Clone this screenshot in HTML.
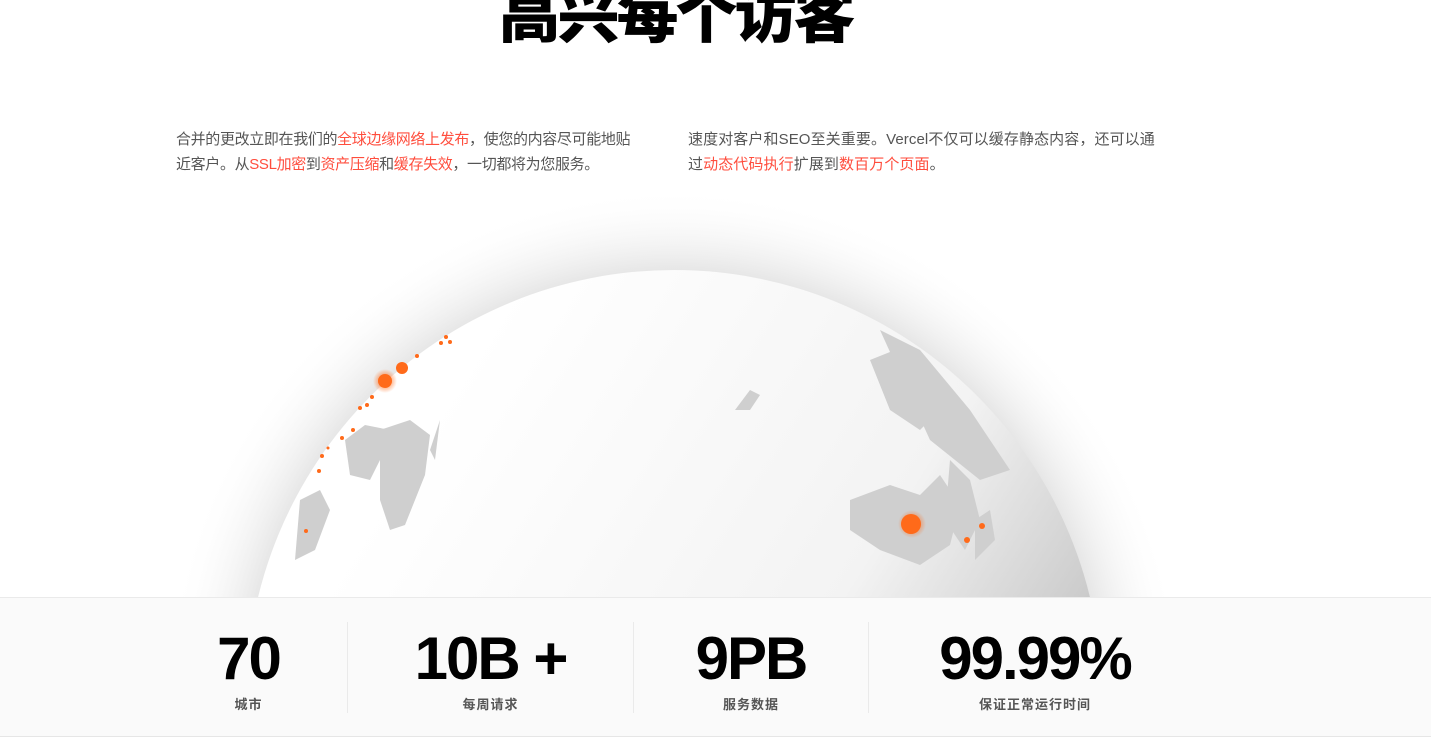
<!DOCTYPE html>
<html><head><meta charset="utf-8"><style>
*{margin:0;padding:0;box-sizing:border-box}
body{width:1431px;height:744px;overflow:hidden;background:#fff;font-family:"Liberation Sans","Noto Sans CJK SC",sans-serif;position:relative}
h1{position:absolute;left:0;width:1351px;top:-23px;text-align:center;font-size:62px;font-weight:900;color:#000;line-height:80px;letter-spacing:-3px}
.p{position:absolute;top:128px;width:482px;font-size:15px;line-height:24.5px;color:#555;letter-spacing:0.1px}
.p span{color:#ff4d3d}
svg.g{position:absolute;left:0;top:0}
.stats{position:absolute;left:0;top:597px;width:1431px;height:140px;background:#fafafa;border-top:1px solid #eaeaea;border-bottom:1px solid #e6e6e6}
.s{position:absolute;top:24px;height:91px;text-align:center}
.s b{display:block;font-size:60px;line-height:74px;font-weight:700;color:#000;letter-spacing:-2px}
.s i{display:block;font-style:normal;font-size:13px;font-weight:700;color:#555;letter-spacing:1px;margin-top:-2px}
.d{position:absolute;top:24px;width:1px;height:91px;background:#eaeaea}
</style></head><body>
<h1>高兴每个访客</h1>
<div class="p" style="left:176px;width:465px;letter-spacing:-0.35px">合并的更改立即在我们的<span>全球边缘网络上发布</span>，使您的内容尽可能地贴近客户。从<span>SSL加密</span>到<span>资产压缩</span>和<span>缓存失效</span>，一切都将为您服务。</div>
<div class="p" style="left:688px;width:480px">速度对客户和SEO至关重要。Vercel不仅可以缓存静态内容，还可以通过<span>动态代码执行</span>扩展到<span>数百万个页面</span>。</div>
<svg class="g" width="1431" height="597" viewBox="0 0 1431 597">
<defs>
<radialGradient id="glow" cx="674" cy="698" r="510" gradientUnits="userSpaceOnUse">
<stop offset="0.83" stop-color="#ddd" stop-opacity="0.8"/><stop offset="1" stop-color="#fff" stop-opacity="0"/></radialGradient>
<linearGradient id="sph" x1="0.2" y1="0.2" x2="1" y2="0.7">
<stop offset="0" stop-color="#fff"/><stop offset="0.55" stop-color="#f3f3f3"/><stop offset="0.8" stop-color="#cccccc"/><stop offset="1" stop-color="#999"/></linearGradient>
<radialGradient id="dg"><stop offset="0" stop-color="#ff6a1a"/><stop offset="1" stop-color="#ff6a1a" stop-opacity="0"/></radialGradient>
</defs>
<circle cx="674" cy="698" r="510" fill="url(#glow)"/>
<circle cx="674" cy="698" r="428" fill="url(#sph)"/>
<g fill="#cfcfcf">
<path d="M345 440 l20 -15 25 5 -5 20 -15 30 -20 -5z"/>
<path d="M380 430 l30 -10 20 15 -5 40 -20 50 -15 5 -10 -30z"/>
<path d="M300 500 l20 -10 10 20 -15 40 -20 10z"/>
<path d="M440 420 l-10 30 5 10z"/>
<path d="M735 410 l15 -20 10 5 -10 15z"/>
<path d="M870 360 l25 -10 30 20 15 40 -20 20 -30 -20z"/>
<path d="M880 330 l40 20 50 60 40 60 -30 10 -50 -40z"/>
<path d="M850 500 l40 -15 30 10 20 -20 20 30 -10 40 -30 20 -40 -15 -30 -20z"/>
<path d="M950 460 l20 20 10 40 -15 30 -20 -30z"/>
<path d="M975 520 l15 -10 5 30 -20 20z"/>
</g>
<g fill="#ff6a1a">
<circle cx="912" cy="524" r="14" fill="url(#dg)"/><circle cx="911" cy="524" r="10"/>
<circle cx="385" cy="381" r="12" fill="url(#dg)"/><circle cx="385" cy="381" r="7"/>
<circle cx="402" cy="368" r="6"/>
<circle cx="417" cy="356" r="2"/><circle cx="441" cy="343" r="2"/><circle cx="450" cy="342" r="2"/><circle cx="446" cy="337" r="2"/>
<circle cx="372" cy="397" r="2"/><circle cx="367" cy="405" r="2"/><circle cx="360" cy="408" r="2"/><circle cx="353" cy="430" r="2"/><circle cx="342" cy="438" r="2"/><circle cx="328" cy="448" r="1.5"/><circle cx="322" cy="456" r="2"/><circle cx="319" cy="471" r="2"/><circle cx="306" cy="531" r="2"/>
<circle cx="982" cy="526" r="3"/><circle cx="967" cy="540" r="3"/>
</g>
</svg>
<div class="stats">
<div class="s" style="left:150px;width:197px"><b>70</b><i>城市</i></div>
<div class="d" style="left:347px"></div>
<div class="s" style="left:348px;width:285px"><b>10B +</b><i>每周请求</i></div>
<div class="d" style="left:633px"></div>
<div class="s" style="left:634px;width:234px"><b>9PB</b><i>服务数据</i></div>
<div class="d" style="left:868px"></div>
<div class="s" style="left:869px;width:332px"><b>99.99%</b><i>保证正常运行时间</i></div>
</div>
</body></html>
